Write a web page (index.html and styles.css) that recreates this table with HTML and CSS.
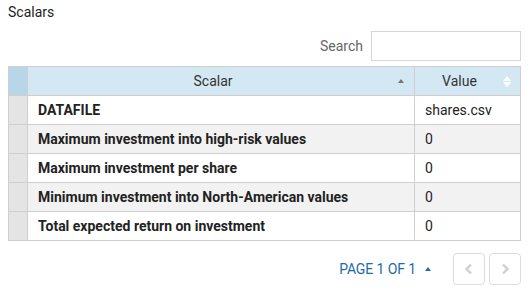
FILE: index.html
```html
<!DOCTYPE html>
<html lang="en">
<head>
  <meta charset="UTF-8">
  <title>Scalars</title>
  <link rel="stylesheet" href="styles.css">
</head>
<body>
  <div class="title">Scalars</div>

  <div class="search-row">
    <label for="search">Search</label>
    <input type="text" id="search">
  </div>

  <table class="grid">
    <colgroup>
      <col class="col-index">
      <col class="col-name">
      <col class="col-value">
    </colgroup>
    <thead>
      <tr>
        <th class="idx"></th>
        <th class="sorted">Scalar<span class="sort-up"></span></th>
        <th class="sortable">Value<span class="sort-both"><i class="up"></i><i class="down"></i></span></th>
      </tr>
    </thead>
    <tbody>
      <tr><td class="idx"></td><td class="name">DATAFILE</td><td>shares.csv</td></tr>
      <tr><td class="idx"></td><td class="name">Maximum investment into high-risk values</td><td>0</td></tr>
      <tr><td class="idx"></td><td class="name">Maximum investment per share</td><td>0</td></tr>
      <tr><td class="idx"></td><td class="name">Minimum investment into North-American values</td><td>0</td></tr>
      <tr><td class="idx"></td><td class="name">Total expected return on investment</td><td>0</td></tr>
    </tbody>
  </table>

  <div class="pager">
    <span class="page-label">PAGE 1 OF 1</span>
    <span class="page-caret"></span>
    <button class="page-btn" disabled>
      <svg width="10" height="12" viewBox="0 0 10 12"><path d="M7 1.5 L2.5 6 L7 10.5" fill="none" stroke="#cfcfcf" stroke-width="2.4"/></svg>
    </button>
    <button class="page-btn" disabled>
      <svg width="10" height="12" viewBox="0 0 10 12"><path d="M3 1.5 L7.5 6 L3 10.5" fill="none" stroke="#cfcfcf" stroke-width="2.4"/></svg>
    </button>
  </div>
</body>
</html>
```

FILE: styles.css
```css
body {
  margin: 0;
  padding: 4px 9px 0 8px;
  font-family: Roboto, "Liberation Sans", sans-serif;
  font-size: 14px;
  color: #222;
  background: #fff;
}

.title {
  line-height: 16px;
  color: #222;
}

.search-row {
  display: flex;
  justify-content: flex-end;
  align-items: center;
  gap: 8px;
  margin-top: 11px;
}

.search-row label {
  color: #666;
}

.search-row input {
  box-sizing: border-box;
  width: 150px;
  height: 30px;
  border: 1px solid #d6d6d6;
  margin: 0;
  padding: 0 6px;
  font-family: inherit;
}

.grid {
  margin-top: 5px;
  width: 513px;
  border-collapse: collapse;
  table-layout: fixed;
}

.col-index { width: 19px; }
.col-value { width: 106px; }

.grid th,
.grid td {
  border: 1px solid #cfcfcf;
  height: 29px;
  padding: 0 10px;
  box-sizing: border-box;
  white-space: nowrap;
}

.grid th {
  background: #d4e8f3;
  font-weight: normal;
  color: #333;
  text-align: center;
  position: relative;
  padding-right: 26px;
}

.grid th.idx {
  background: #b8d6e8;
  padding: 0;
}

.grid td.idx {
  background: #e4e4e4;
  padding: 0;
}

.grid tbody tr:nth-child(even) td {
  background: #f2f2f2;
}

.grid tbody tr:nth-child(even) td.idx {
  background: #e4e4e4;
}

.grid td.name {
  font-weight: bold;
  color: #222;
}

.sort-up {
  position: absolute;
  right: 10px;
  top: 12px;
  width: 0;
  height: 0;
  border-left: 3px solid transparent;
  border-right: 3px solid transparent;
  border-bottom: 4px solid #777;
}

.sort-both {
  position: absolute;
  right: 9px;
  top: 9px;
  width: 8px;
  height: 11px;
}

.sort-both i {
  display: block;
  width: 0;
  height: 0;
  border-left: 4px solid transparent;
  border-right: 4px solid transparent;
}

.sort-both .up {
  border-bottom: 5px solid #fff;
  margin-bottom: 1px;
}

.sort-both .down {
  border-top: 5px solid #fff;
}

.pager {
  display: flex;
  justify-content: flex-end;
  align-items: center;
  margin-top: 12px;
}

.page-label {
  color: #1d6bab;
  letter-spacing: -0.1px;
}

.page-caret {
  width: 0;
  height: 0;
  margin: 0 18px 0 9px;
  border-left: 3px solid transparent;
  border-right: 3px solid transparent;
  border-bottom: 4px solid #1d6bab;
}

.page-btn {
  box-sizing: border-box;
  width: 32px;
  height: 32px;
  margin: 0 0 0 4px;
  padding: 0;
  border: 1px solid #dcdcdc;
  border-radius: 4px;
  background: #fff;
  display: flex;
  align-items: center;
  justify-content: center;
}
```
